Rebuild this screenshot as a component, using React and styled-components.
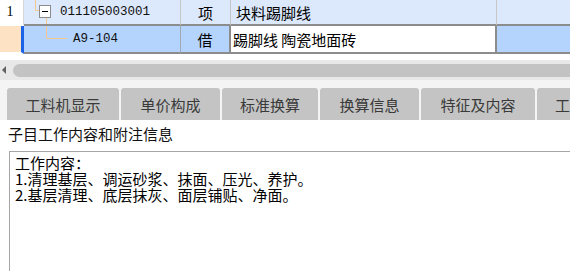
import React from 'react';
import styled, { createGlobalStyle } from 'styled-components';

const GlobalStyle = createGlobalStyle`
    body {
        margin: 0;
        background: #ffffff;
        font-family: "Noto Sans CJK SC", "Noto Sans", sans-serif;
        overflow: hidden;
    }
`;

const Page = styled.div`
    width: 570px;
    height: 271px;
    overflow: hidden;
    display: flex;
    flex-direction: column;
`;

// GRID
const Row = styled.div`
    display: flex;
    height: ${(p) => p.$h}px;
    flex-shrink: 0;
`;

const Cell = styled.div`
    box-sizing: border-box;
    flex: ${(p) => (p.$w ? `0 0 ${p.$w}px` : '1')};
    display: flex;
    align-items: center;
    justify-content: ${(p) => (p.$center ? 'center' : 'flex-start')};
    padding-left: ${(p) => p.$pl || 0}px;
    background: ${(p) => p.$bg};
    border-right: ${(p) => p.$right || 'none'};
    border-bottom: 2px solid ${(p) => p.$line || '#8c8c8c'};
    font-size: 15px;
    color: #000;
    white-space: nowrap;
    overflow: hidden;
`;

const Code = styled.span`
    font-family: "Liberation Mono", monospace;
    font-size: 12.5px;
    color: #111;
`;

const Num = styled.span`
    font-family: "Liberation Serif", serif;
    font-size: 14px;
    margin-left: -3px;
`;

// SCROLLBAR
const ScrollTrack = styled.div`
    margin-top: 6px;
    height: 20px;
    flex-shrink: 0;
    background: #e8e8e8;
    display: flex;
    align-items: center;
    padding-left: 2px;
`;

const Arrow = styled.div`
    width: 0;
    height: 0;
    border-top: 4px solid transparent;
    border-bottom: 4px solid transparent;
    border-right: 4px solid #606060;
`;

const Thumb = styled.div`
    flex: 1;
    margin-left: 7px;
    height: 13px;
    background: #c3c3c3;
    border-radius: 7px 0 0 7px;
`;

// TABS
const TabStrip = styled.div`
    display: flex;
    gap: 2px;
    padding: 8px 0 0 7px;
    height: 32px;
    flex-shrink: 0;
    background: #f4f4f4;
`;

const Tab = styled.div`
    flex: 0 0 ${(p) => p.$w}px;
    box-sizing: border-box;
    height: 32px;
    background: #c4c4c4;
    border-radius: 3px 3px 0 0;
    display: flex;
    align-items: center;
    justify-content: ${(p) => (p.$clip ? 'flex-start' : 'center')};
    padding-left: ${(p) => (p.$clip ? 18 : 0)}px;
    font-size: 15px;
    color: #3a3a3a;
    white-space: nowrap;
    overflow: hidden;
`;

// NOTES
const Label = styled.div`
    padding: 4px 0 0 8px;
    line-height: 20px;
    font-size: 15px;
    color: #111;
    flex-shrink: 0;
`;

const NoteBox = styled.div`
    margin: 7px 0 0 9px;
    flex: 1;
    border: 1px solid #a6a6a6;
    border-right: none;
    border-bottom: none;
    padding: 3px 5px;
    font-size: 15px;
    line-height: 16px;
    color: #000;
`;

const Line = styled.div`
    white-space: nowrap;
`;

const TREE = '#f6c890';

const ExpandTree = () => (
    <svg width="36" height="24" style={{ flexShrink: 0 }}>
        <path d="M11.5 0 V10.5 H15" stroke={TREE} fill="none" />
        <path d="M22.5 17.5 V24" stroke={TREE} fill="none" />
        <rect x="15.5" y="5.5" width="11" height="12" fill="#fff" stroke="#8c8c8c" />
        <path d="M18 11.5 H24" stroke="#000" />
    </svg>
);

const ChildTree = () => (
    <svg width="49" height="26" style={{ flexShrink: 0 }}>
        <path d="M22.5 0 V12.5 H43" stroke={TREE} fill="none" />
    </svg>
);

const tabs = [
    { label: '工料机显示', w: 112 },
    { label: '单价构成', w: 99 },
    { label: '标准换算', w: 96 },
    { label: '换算信息', w: 99 },
    { label: '特征及内容', w: 114 },
    { label: '工料机', w: 60, clip: true },
];

const notes = [
    '工作内容：',
    '1.清理基层、调运砂浆、抹面、压光、养护。',
    '2.基层清理、底层抹灰、面层铺贴、净面。',
];

const App = () => {
    return (
        <Page>
            <GlobalStyle />
            <Row $h={26}>
                <Cell $w={24} $bg="#ffffff" $right="1px solid #d6d6d6" $line="#ffffff" $center>
                    <Num>1</Num>
                </Cell>
                <Cell $w={157} $bg="#dce8fc" $right="1px solid #c6c6c6">
                    <ExpandTree />
                    <Code>011105003001</Code>
                </Cell>
                <Cell $w={50} $bg="#dce8fc" $right="1px solid #c6c6c6" $center>
                    项
                </Cell>
                <Cell $w={266} $bg="#dce8fc" $right="1px solid #c6c6c6" $pl={5}>
                    块料踢脚线
                </Cell>
                <Cell $bg="#dce8fc" />
            </Row>
            <Row $h={28}>
                <Cell $w={24} $bg="#fde3c4" $right="3px solid #1a62e6" $line="#ffffff" />
                <Cell $w={157} $bg="#b4d4fd" $right="1px solid #a0a8b4">
                    <ChildTree />
                    <Code>A9-104</Code>
                </Cell>
                <Cell $w={50} $bg="#b4d4fd" $right="2px solid #8c8c8c" $center>
                    借
                </Cell>
                <Cell $w={266} $bg="#ffffff" $right="2px solid #8c8c8c" $pl={2}>
                    踢脚线 陶瓷地面砖
                </Cell>
                <Cell $bg="#b4d4fd" />
            </Row>
            <ScrollTrack>
                <Arrow />
                <Thumb />
            </ScrollTrack>
            <TabStrip>
                {tabs.map((t) => (
                    <Tab key={t.label} $w={t.w} $clip={t.clip}>
                        {t.label}
                    </Tab>
                ))}
            </TabStrip>
            <Label>子目工作内容和附注信息</Label>
            <NoteBox>
                {notes.map((n) => (
                    <Line key={n}>{n}</Line>
                ))}
            </NoteBox>
        </Page>
    );
};

export default App;
